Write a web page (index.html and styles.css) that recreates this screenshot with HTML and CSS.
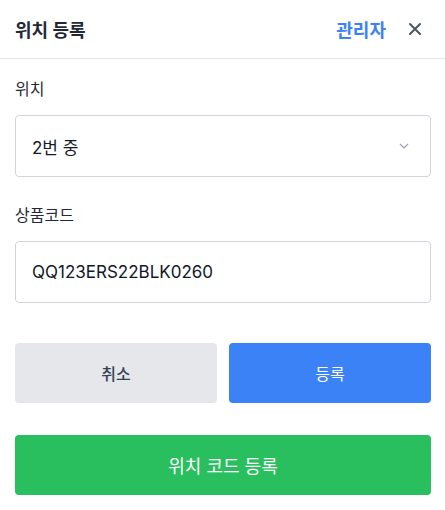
FILE: index.html
```html
<!DOCTYPE html>
<html lang="ko">
<head>
<meta charset="utf-8">
<link rel="stylesheet" href="styles.css">
</head>
<body>
<div class="dialog">
  <div class="header">
    <div class="title">위치 등록</div>
    <div class="header-actions">
      <span class="admin">관리자</span>
      <svg class="close" width="14" height="14" viewBox="0 0 14 14"><path d="M2 2L12 12M12 2L2 12" stroke="#4b5563" stroke-width="2" stroke-linecap="round"/></svg>
    </div>
  </div>
  <div class="body">
    <div class="field">
      <div class="label">위치</div>
      <div class="control select">
        <span>2번 중</span>
        <svg width="10" height="6" viewBox="0 0 10 6"><path d="M1 1L5 5L9 1" fill="none" stroke="#9ca3af" stroke-width="1.2"/></svg>
      </div>
    </div>
    <div class="field">
      <div class="label">상품코드</div>
      <div class="control">QQ123ERS22BLK0260</div>
    </div>
    <div class="actions">
      <button class="btn btn-gray">취소</button>
      <button class="btn btn-blue">등록</button>
    </div>
    <button class="btn btn-green">위치 코드 등록</button>
  </div>
</div>
</body>
</html>
```
FILE: styles.css
```css
* { box-sizing: border-box; }
html, body { margin: 0; padding: 0; background: #fff; }
body {
  font-family: Inter, "Noto Sans CJK KR", sans-serif;
  color: #1f2937;
  width: 445px;
}
.header {
  height: 59px;
  border-bottom: 1px solid #e5e7eb;
  display: flex;
  align-items: center;
  justify-content: space-between;
  padding: 0 23px 0 15px;
}
.title { font-size: 18px; font-weight: 700; color: #1f2937; }
.header-actions { display: flex; align-items: center; gap: 22px; }
.admin { color: #3b82f6; font-weight: 700; font-size: 18px; }
.close { display: block; }
.body { padding: 18px 14px 0 15px; }
.field { margin-bottom: 26px; }
.label { font-size: 16px; color: #1f2937; line-height: 24px; margin-bottom: 14px; }
.control {
  height: 62px;
  border: 1px solid #d1d5db;
  border-radius: 4px;
  display: flex;
  align-items: center;
  padding: 0 16px;
  font-size: 17px;
  color: #111827;
}
.select { justify-content: space-between; padding-right: 21px; }
.select svg { display: block; }
.actions { display: flex; gap: 12px; margin-top: 40px; }
.btn {
  font-family: Inter, "Noto Sans CJK KR", sans-serif;
  border: none;
  border-radius: 4px;
  height: 60px;
  font-size: 16px;
  cursor: pointer;
}
.actions .btn { flex: 1; }
.btn-gray { background: #e5e7eb; color: #374151; font-weight: 500; }
.btn-blue { background: #3b82f6; color: #fff; }
.btn-green { background: #29bf5e; color: #fff; width: 100%; margin-top: 32px; font-size: 18px; }
```
